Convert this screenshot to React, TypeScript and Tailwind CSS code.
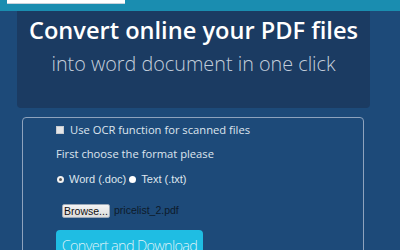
export default function App() {
  return (
    <div className="relative h-[250px] w-[400px] overflow-hidden bg-[#1d4a79] font-['Open_Sans',sans-serif]">
      <div className="h-[11px] bg-[#1a8db0]">
        <div className="ml-[7px] h-[4px] w-[118px] border-b border-[#c9d3dc] bg-white" />
      </div>
      <div className="mx-[17px] flex h-[97px] w-[353px] flex-col items-center rounded-b-[4px] bg-[#1b3b62] pt-[3px]">
        <h1 className="whitespace-nowrap text-[23.6px] font-semibold leading-[32px] text-white">
          Convert online your PDF files
        </h1>
        <p className="mt-[4px] whitespace-nowrap text-[19.8px] font-light leading-[28px] text-[#c3cedb]">
          into word document in one click
        </p>
      </div>
      <div className="ml-[22px] mt-[9px] h-[200px] w-[342px] rounded-[4px] border border-[#8ea3bd] pl-[33px] pt-[4px]">
        <label className="flex items-center gap-[6px] text-[11.2px] leading-[16px] text-[#dde5ee]">
          <span className="h-[8px] w-[8px] border border-[#c8ccd0] bg-[#e4e6e8]" />
          Use OCR function for scanned files
        </label>
        <p className="mt-[8px] text-[11.2px] leading-[16px] text-[#dde5ee]">First choose the format please</p>
        <div className="mt-[10px] flex items-center font-['Liberation_Sans',sans-serif] text-[11px] leading-[14px] text-[#dfe6ee]">
          <span className="ml-[1px] flex h-[7px] w-[7px] items-center justify-center rounded-full bg-[#f2f2f2]">
            <span className="h-[3px] w-[3px] rounded-full bg-[#555]" />
          </span>
          <span className="ml-[5px]">Word (.doc)</span>
          <span className="ml-[3px] h-[7px] w-[7px] rounded-full bg-white" />
          <span className="ml-[5px]">Text (.txt)</span>
        </div>
        <div className="ml-[6px] mt-[17px] flex items-center font-['Liberation_Sans',sans-serif] text-[10.5px] text-[#111]">
          <span className="flex h-[14px] w-[48px] items-center justify-center rounded-[2px] border border-[#9aa8b8] bg-gradient-to-b from-[#f4f4f4] to-[#dcdcdc] leading-none">
            Browse...
          </span>
          <span className="ml-[4px] text-[#0d1a2a]">pricelist_2.pdf</span>
        </div>
        <button className="mt-[11px] flex h-[26px] w-[147px] items-start justify-center whitespace-nowrap rounded-[4px] bg-[#1fbde3] pt-[6px] text-[14.5px] font-light leading-[20px] tracking-[-0.7px] text-[#dcf1f8]">
          Convert and Download
        </button>
      </div>
    </div>
  );
}
